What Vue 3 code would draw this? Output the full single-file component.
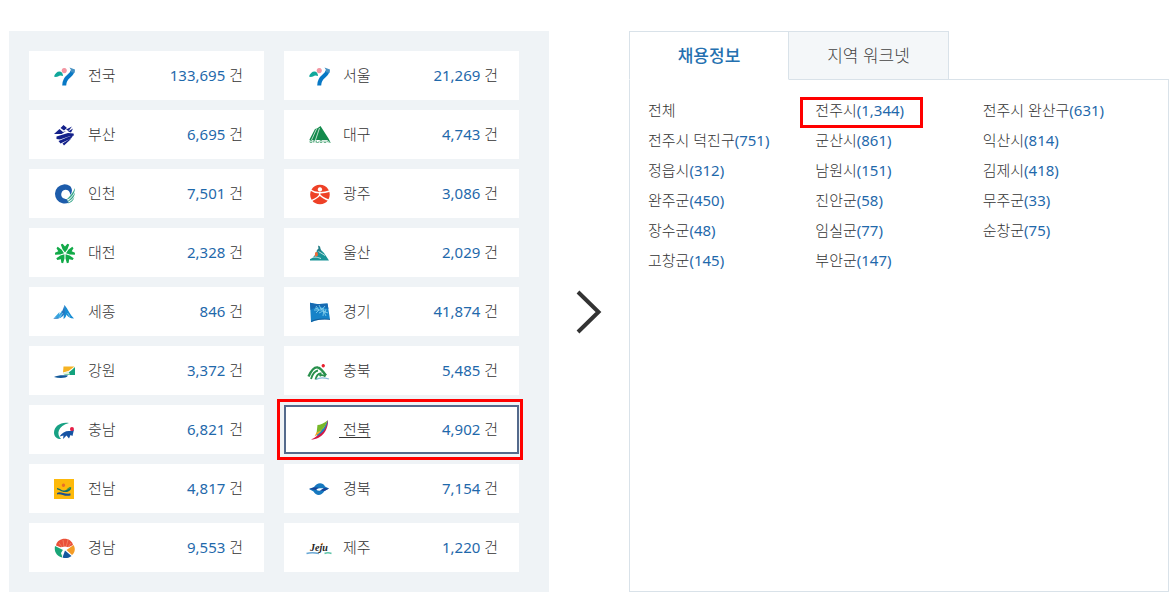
<template>
  <main class="region-jobs">
    <nav class="region-panel" aria-label="지역별 채용정보">
      <a
        v-for="region in regions"
        :key="region.name"
        href="#"
        class="region-card"
        :class="{ selected: region.name === selectedRegion }"
        @click.prevent="selectedRegion = region.name"
      >
        <svg class="region-icon" viewBox="0 0 26 25" aria-hidden="true">
          <path
            v-for="(shape, i) in icons[region.icon]"
            :key="i"
            :d="shape.d"
            :fill="shape.fill || 'none'"
            :stroke="shape.stroke || 'none'"
            :stroke-width="shape.width || 1"
          />
          <text v-if="region.icon === 'jeju'" class="jeju-text" x="4" y="16">Jeju</text>
        </svg>
        <span class="region-name">&nbsp;{{ region.name }}</span>
        <span class="region-count"><span class="number">{{ region.count }}</span> 건</span>
      </a>
    </nav>

    <svg class="arrow" viewBox="0 0 26 44" aria-hidden="true">
      <path d="M2 2 22.500 22 2 42" fill="none" stroke="#333" stroke-width="4" />
    </svg>

    <section class="detail">
      <div class="tabs" role="tablist">
        <button
          v-for="tab in tabs"
          :key="tab"
          type="button"
          role="tab"
          class="tab"
          :class="{ active: tab === activeTab }"
          :aria-selected="tab === activeTab"
          @click="activeTab = tab"
        >
          {{ tab }}
        </button>
      </div>
      <div class="detail-panel">
        <ul class="city-list">
          <li v-for="city in cities" :key="city.name">
            <a href="#" class="city" :class="{ marked: city.marked }" @click.prevent>{{ city.name }}<span v-if="city.count" class="number">({{ city.count }})</span></a>
          </li>
        </ul>
      </div>
    </section>
  </main>
</template>

<script setup>
import { ref } from 'vue'

const selectedRegion = ref('전북')
const tabs = ['채용정보', '지역 워크넷']
const activeTab = ref('채용정보')

const regions = [
  { name: '전국', count: '133,695', icon: 'seoul' },
  { name: '서울', count: '21,269', icon: 'seoul' },
  { name: '부산', count: '6,695', icon: 'busan' },
  { name: '대구', count: '4,743', icon: 'daegu' },
  { name: '인천', count: '7,501', icon: 'incheon' },
  { name: '광주', count: '3,086', icon: 'gwangju' },
  { name: '대전', count: '2,328', icon: 'daejeon' },
  { name: '울산', count: '2,029', icon: 'ulsan' },
  { name: '세종', count: '846', icon: 'sejong' },
  { name: '경기', count: '41,874', icon: 'gyeonggi' },
  { name: '강원', count: '3,372', icon: 'gangwon' },
  { name: '충북', count: '5,485', icon: 'chungbuk' },
  { name: '충남', count: '6,821', icon: 'chungnam' },
  { name: '전북', count: '4,902', icon: 'jeonbuk' },
  { name: '전남', count: '4,817', icon: 'jeonnam' },
  { name: '경북', count: '7,154', icon: 'gyeongbuk' },
  { name: '경남', count: '9,553', icon: 'gyeongnam' },
  { name: '제주', count: '1,220', icon: 'jeju' }
]

const cities = [
  { name: '전체' },
  { name: '전주시', count: '1,344', marked: true },
  { name: '전주시 완산구', count: '631' },
  { name: '전주시 덕진구', count: '751' },
  { name: '군산시', count: '861' },
  { name: '익산시', count: '814' },
  { name: '정읍시', count: '312' },
  { name: '남원시', count: '151' },
  { name: '김제시', count: '418' },
  { name: '완주군', count: '450' },
  { name: '진안군', count: '58' },
  { name: '무주군', count: '33' },
  { name: '장수군', count: '48' },
  { name: '임실군', count: '77' },
  { name: '순창군', count: '75' },
  { name: '고창군', count: '145' },
  { name: '부안군', count: '147' }
]

// One notched petal of the Daejeon flower, pointing at the given angle
const petal = (angle) => {
  const point = (offset, radius) => {
    const rad = ((angle + offset - 90) * Math.PI) / 180
    return `${(14 + radius * Math.cos(rad)).toFixed(1)} ${(13.5 + radius * Math.sin(rad)).toFixed(1)}`
  }
  return `M${point(0, 1)}L${point(-30, 5)} ${point(-25, 10)} ${point(-14, 10)} ${point(0, 7)} ${point(14, 10)} ${point(25, 10)} ${point(30, 5)}Z`
}

// Emblem shapes, painted in order inside a 26x25 box
const icons = {
  seoul: [
    { d: 'M3 13.500C4 10.500 6 8.500 8.500 8.500 10.500 8.500 12 10.500 12 13 9.500 12 8.500 12.500 7 13.500 5.500 14 4 14 3 13.500Z', fill: '#10a79b' },
    { d: 'M13.300 5A2.600 2.600 0 1 1 13.200 5Z', fill: '#f397a3' },
    { d: 'M21.500 7.500C21.500 13.500 13 12.500 13.200 22.500', stroke: '#0878c5', width: 4 },
    { d: 'M18.500 4.500 24 6.500 23.500 10 19.500 9 20 7Z', fill: '#4791c2' }
  ],
  busan: [
    { d: 'M12.500 3 16 6 13 8.500 9.500 6ZM3 12 8.500 7 12 10 15 9 10.500 12ZM15 7.500 21 4.500 17.500 9ZM17 9.500 22 6.500 20 10.500Z', fill: '#14218a' },
    { d: 'M5.500 14.500 17 11 22.500 11.500 23 13.500 19 14 9 17.500 5.500 17ZM7.500 19 17 15 22.500 13 20 16.500 9.500 21.500ZM11.500 21.500 18 17.500 20 17 13 23.500Z', fill: '#14218a' }
  ],
  daegu: [
    { d: 'M3.500 17.500 9 7 11 6.500 14.500 4 22.500 16.500 24.500 20.500 21 18 3.500 18Z', fill: '#138a4c' },
    { d: 'M5.500 18 10.500 7M9.500 18 13.500 6', stroke: '#fff', width: 0.7 },
    { d: 'M4 18.500V20.500H6V18.500ZM7.500 20.500V18.500H9V20.500M10.500 18.500V20.500H12.500V19.500M14 18.500V20.500H16V18.500ZM18 18.500V20.500H20V18.500M21 19.500 24.500 20.500', stroke: '#3a9b69', width: 0.7 }
  ],
  incheon: [
    { d: 'M19 5A9.600 9.600 0 1 0 18 21.500L15.500 18C11.500 18 9.500 15 10.500 12 11.500 8.500 16.500 7.500 18.500 11L19.500 14C21.500 11 21.500 7.500 19 5Z', fill: '#1d5cab' },
    { d: 'M24 7C24 12 20.500 17.500 15 19 18.500 16 22 12 24 7ZM24 11.500C23.500 16.500 20 20 15.500 21 19 18.500 22 15.500 24 11.500ZM23.500 16C22.500 19.500 20 22 16.500 22.500 19.500 20.500 22 18.500 23.500 16Z', fill: '#36a68a' }
  ],
  gwangju: [
    { d: 'M14 3.700A9.800 9.800 0 1 1 13.900 3.700Z', fill: '#ee4127' },
    { d: 'M14 6.300A2.200 2.200 0 1 1 13.900 6.300Z', fill: '#fff' },
    { d: 'M4.500 9C9 12.500 17 12.500 24 10M14 11 13.500 14C12 17 9 18 4.500 20M14 14C16 16.500 19 18 23.500 19.500', stroke: '#fff', width: 1.4 }
  ],
  daejeon: [0, 72, 144, 216, 288].map((angle) => ({ d: petal(angle), fill: '#12aa48' })),
  ulsan: [
    { d: 'M4 19C8 17 9.500 14.500 10.500 11.500L14 9 18 13 23 20.500H4Z', fill: '#199497' },
    { d: 'M12 5.500 14 6.500 15.500 13 10.500 10.500 12.500 8.500Z', fill: '#237d86' },
    { d: 'M9 12.500 11.500 12 12 15.500 9 17Z', fill: '#ed6b38' },
    { d: 'M12.500 11.500 19 15.500M4 18.500C9 16 12 17.500 15 18.500', stroke: '#fff', width: 0.7 }
  ],
  sejong: [
    { d: 'M13.500 6C17 10 19 16 23 19.500 19 19.500 16.500 17.500 15.500 15.500 15 18 14 19 12.500 20Z', fill: '#168cd4' },
    { d: 'M13.500 6 14 14C12 18.500 7 20.500 2 19.500 7 18.500 11 15 13.500 6Z', fill: '#2677c0' },
    { d: 'M3 19 8.500 13 8 18M6 19.500 11 11.500 10.500 18', fill: '#35a4df' },
    { d: 'M8 19 12 14M16.500 14 19 18', stroke: '#a4d9f2', width: 0.6 }
  ],
  gyeonggi: [
    { d: 'M4 3.700C10 5.500 16 5 21.500 4.500L24 20.500C17 20 10 21 5 23.300Z', fill: '#1683c8' },
    { d: 'M4 3.700C10 5.500 16 5 21.500 4.500L22.500 10C15 6 9 8 4.500 11Z', fill: '#176ab1' },
    { d: 'M10 7 13 11 10 14M13 6 15.500 11 19 7M8 11H17L20 17M13 14 17 12 22 14M14 9 18 10 17 17M9 9 12 10M20 10 19 14', stroke: '#8bd4ef', width: 0.8 },
    { d: 'M5 22.500C10 20 17 19.500 24 20.500', stroke: '#13528e', width: 0.8 }
  ],
  gangwon: [
    { d: 'M12.500 8.500H23.500L17.500 13 12 14.500Z', fill: '#f6b323' },
    { d: 'M24 9V17H12.500C17 15.500 20.500 12.500 24 9Z', fill: '#13a27d' },
    { d: 'M11.500 15.500 17.500 13.500 19 16.500H14Z', fill: '#e1f1d7' },
    { d: 'M3 19C6 17 13 17 17 17.500 15.500 20.500 8 20.500 3 19Z', fill: '#115899' }
  ],
  chungbuk: [
    { d: 'M2.500 18.500C5 13 8 8.500 12 9.500 14.500 10 17.500 14 20 17.500', stroke: '#29904d', width: 2.4 },
    { d: 'M5 21C6.500 16 9 13 12 12.500M9.500 21.500C10.500 17.500 12.500 15 15.500 15.500M13.500 18C16 16 18 17.500 19.500 18.500', stroke: '#29904d', width: 1.9 },
    { d: 'M17.300 6A1.700 1.700 0 1 1 17.200 6Z', fill: '#e8202e' },
    { d: 'M10 21.500C13 19.500 18 19.500 23 21', stroke: '#85b8d8', width: 1.2 }
  ],
  chungnam: [
    { d: 'M18 6C10 4.500 3 9 3 16 3.500 20 6 22 10 22 5 17 7 9 18 6Z', fill: '#18a184' },
    { d: 'M8.500 19.500C11 15.500 15 13.500 19 14L23 12.500 21.500 19 19.500 18 18 21.500 15.500 18.500 12 22 12.500 18.500Z', fill: '#1554a4' },
    { d: 'M21 10A2 2 0 1 1 20.900 14 2 2 0 0 1 21 10Z', fill: '#e61e46' }
  ],
  jeonbuk: [
    { d: 'M22 3C22.500 12 16.500 22.500 5 22.500 14 19 18 11 22 3Z', fill: '#d41645' },
    { d: 'M22 3C21 11 17 16 11 19L10 16.500 18 11Z', fill: '#1684c4' },
    { d: 'M11.500 8C14 8 18.500 6 21.500 3.500 19.500 10 16 13.500 10.500 16.500Z', fill: '#77b82a' },
    { d: 'M10.500 15.500 16 13C14 16 11 18 8.500 19.500Z', fill: '#f6aa25' }
  ],
  jeonnam: [
    { d: 'M3 3H23V23H3Z', fill: '#fdb90b' },
    { d: 'M12.500 7.500A1.700 1.700 0 1 1 12.400 7.500Z', fill: '#e96e28' },
    { d: 'M6 12C9 12 10.500 15 13.500 14.500 16 14.500 17 11 20 11 21 13 18 16.500 14 16 10 16 8.500 13.500 6 13.500Z', fill: '#126d6b' },
    { d: 'M6 17C9.500 14.500 12.500 18.500 19.500 17.500V19.500C13 21 10 17 6 18.500Z', fill: '#1c528e' },
    { d: 'M16 13.500 20 11.500', stroke: '#55a63b', width: 1 }
  ],
  gyeongbuk: [
    { d: 'M3 13 8 11C11 6 17 6 19 10.500L23 12.500 18.500 15C15 20.500 10 20 7.500 15.500Z', fill: '#1678bf' },
    { d: 'M10 13.500C12.500 11.500 15 12.500 18 12 16 15 12.500 15.500 10 13.500Z', fill: '#fff' },
    { d: 'M3 13 8 11.500 12.500 11.500 10 14ZM14 14.500 18 12 23 12.500 18.500 15Z', fill: '#174297' }
  ],
  gyeongnam: [
    { d: 'M5 10.500C6.500 2 20 1.500 22 10L14 14Z', fill: '#ea5038' },
    { d: 'M4 11 12 15 11 22.500C5 21 3 16 4 11Z', fill: '#19a577' },
    { d: 'M22.500 10C25 14 23.500 18 21 20L15.500 15Z', fill: '#f49c26' },
    { d: 'M14 15.500 20.500 21C17 23.500 14 23.500 11.500 22.500Z', fill: '#14599f' },
    { d: 'M9 12.500 14 11.500 18.500 12.500 14 15ZM12.500 14 11.500 22.500 10 18Z', fill: '#fff' },
    { d: 'M8 8 11 12M12 5 13 12M17 5 15 12M20 8 17 12', stroke: '#f49a76', width: 0.6 }
  ],
  jeju: [
    { d: 'M0.500 18.500C4 17.500 8 17.500 13 18.500', stroke: '#68a7d4', width: 1.6 },
    { d: 'M18.500 18.500C21 17.500 23 17.500 25.500 18.500', stroke: '#60c5aa', width: 1.6 },
    { d: 'M15 9.500 17 8.500', stroke: '#ef8e3d', width: 1.4 }
  ]
}
</script>

<style>
body {
  margin: 0;
  background-color: #fff;
}
</style>

<style scoped>
.region-jobs {
  display: grid;
  grid-template-columns: 1fr 80px 1fr;
  padding: 31px 5px 9px 9px;
  color: #333;
  font-family: "Noto Sans", "Noto Sans CJK KR", sans-serif;
  font-size: 15px;
  font-weight: 300;
  line-height: 30px;
}

a {
  color: inherit;
  text-decoration: none;
}

.number {
  color: #1f69ab;
  font-weight: 400;
}

.region-panel {
  display: grid;
  grid-template-columns: 1fr 1fr;
  gap: 10px 20px;
  align-content: start;
  padding: 20px 30px 20px 20px;
  background-color: #eff3f6;
}

.region-card {
  position: relative;
  display: flex;
  align-items: center;
  height: 49px;
  box-sizing: border-box;
  padding: 0 21px 0 22px;
  background-color: #fff;
}

.region-icon {
  flex: none;
  width: 26px;
  height: 25px;
  margin-right: 7px;
}

.jeju-text {
  font-family: "Liberation Serif", serif;
  font-size: 10px;
  font-style: italic;
  font-weight: bold;
  fill: #222;
}

.region-name,
.region-count {
  padding-bottom: 2px;
  white-space: nowrap;
}

.region-count {
  margin-left: auto;
}

.region-card.selected {
  box-shadow: inset 0 0 0 2px #546a8c;
}

.region-card.selected .region-name {
  text-decoration: underline;
  text-underline-offset: 2px;
}

.region-card.selected::after {
  content: "";
  position: absolute;
  inset: -6px -4px -6px -7px;
  border: 3px solid #f00;
  pointer-events: none;
}

.arrow {
  width: 26px;
  height: 44px;
  place-self: center;
}

.detail {
  display: flex;
  flex-direction: column;
}

.tabs {
  display: flex;
}

.tab {
  width: 161px;
  height: 49px;
  margin: 0 0 -1px -1px;
  padding: 0 0 2px;
  border: 1px solid #d9e2e9;
  background-color: #f4f7f9;
  color: #444;
  font-family: inherit;
  font-size: 17px;
  font-weight: 300;
  cursor: pointer;
}

.tab:first-child {
  width: 160px;
  margin-left: 0;
}

.tab.active {
  z-index: 1;
  border-bottom-color: #fff;
  background-color: #fff;
  color: #2470b0;
  font-weight: 500;
}

.detail-panel {
  flex: 1;
  padding: 15px 18px;
  border: 1px solid #d9e2e9;
}

.city-list {
  display: grid;
  grid-template-columns: repeat(3, 1fr);
  margin: 0;
  padding: 0;
  list-style: none;
}

.city {
  position: relative;
  white-space: nowrap;
}

.city.marked::after {
  content: "";
  position: absolute;
  inset: -3px -19px -8px -15px;
  border: 3px solid #f00;
  pointer-events: none;
}
</style>
